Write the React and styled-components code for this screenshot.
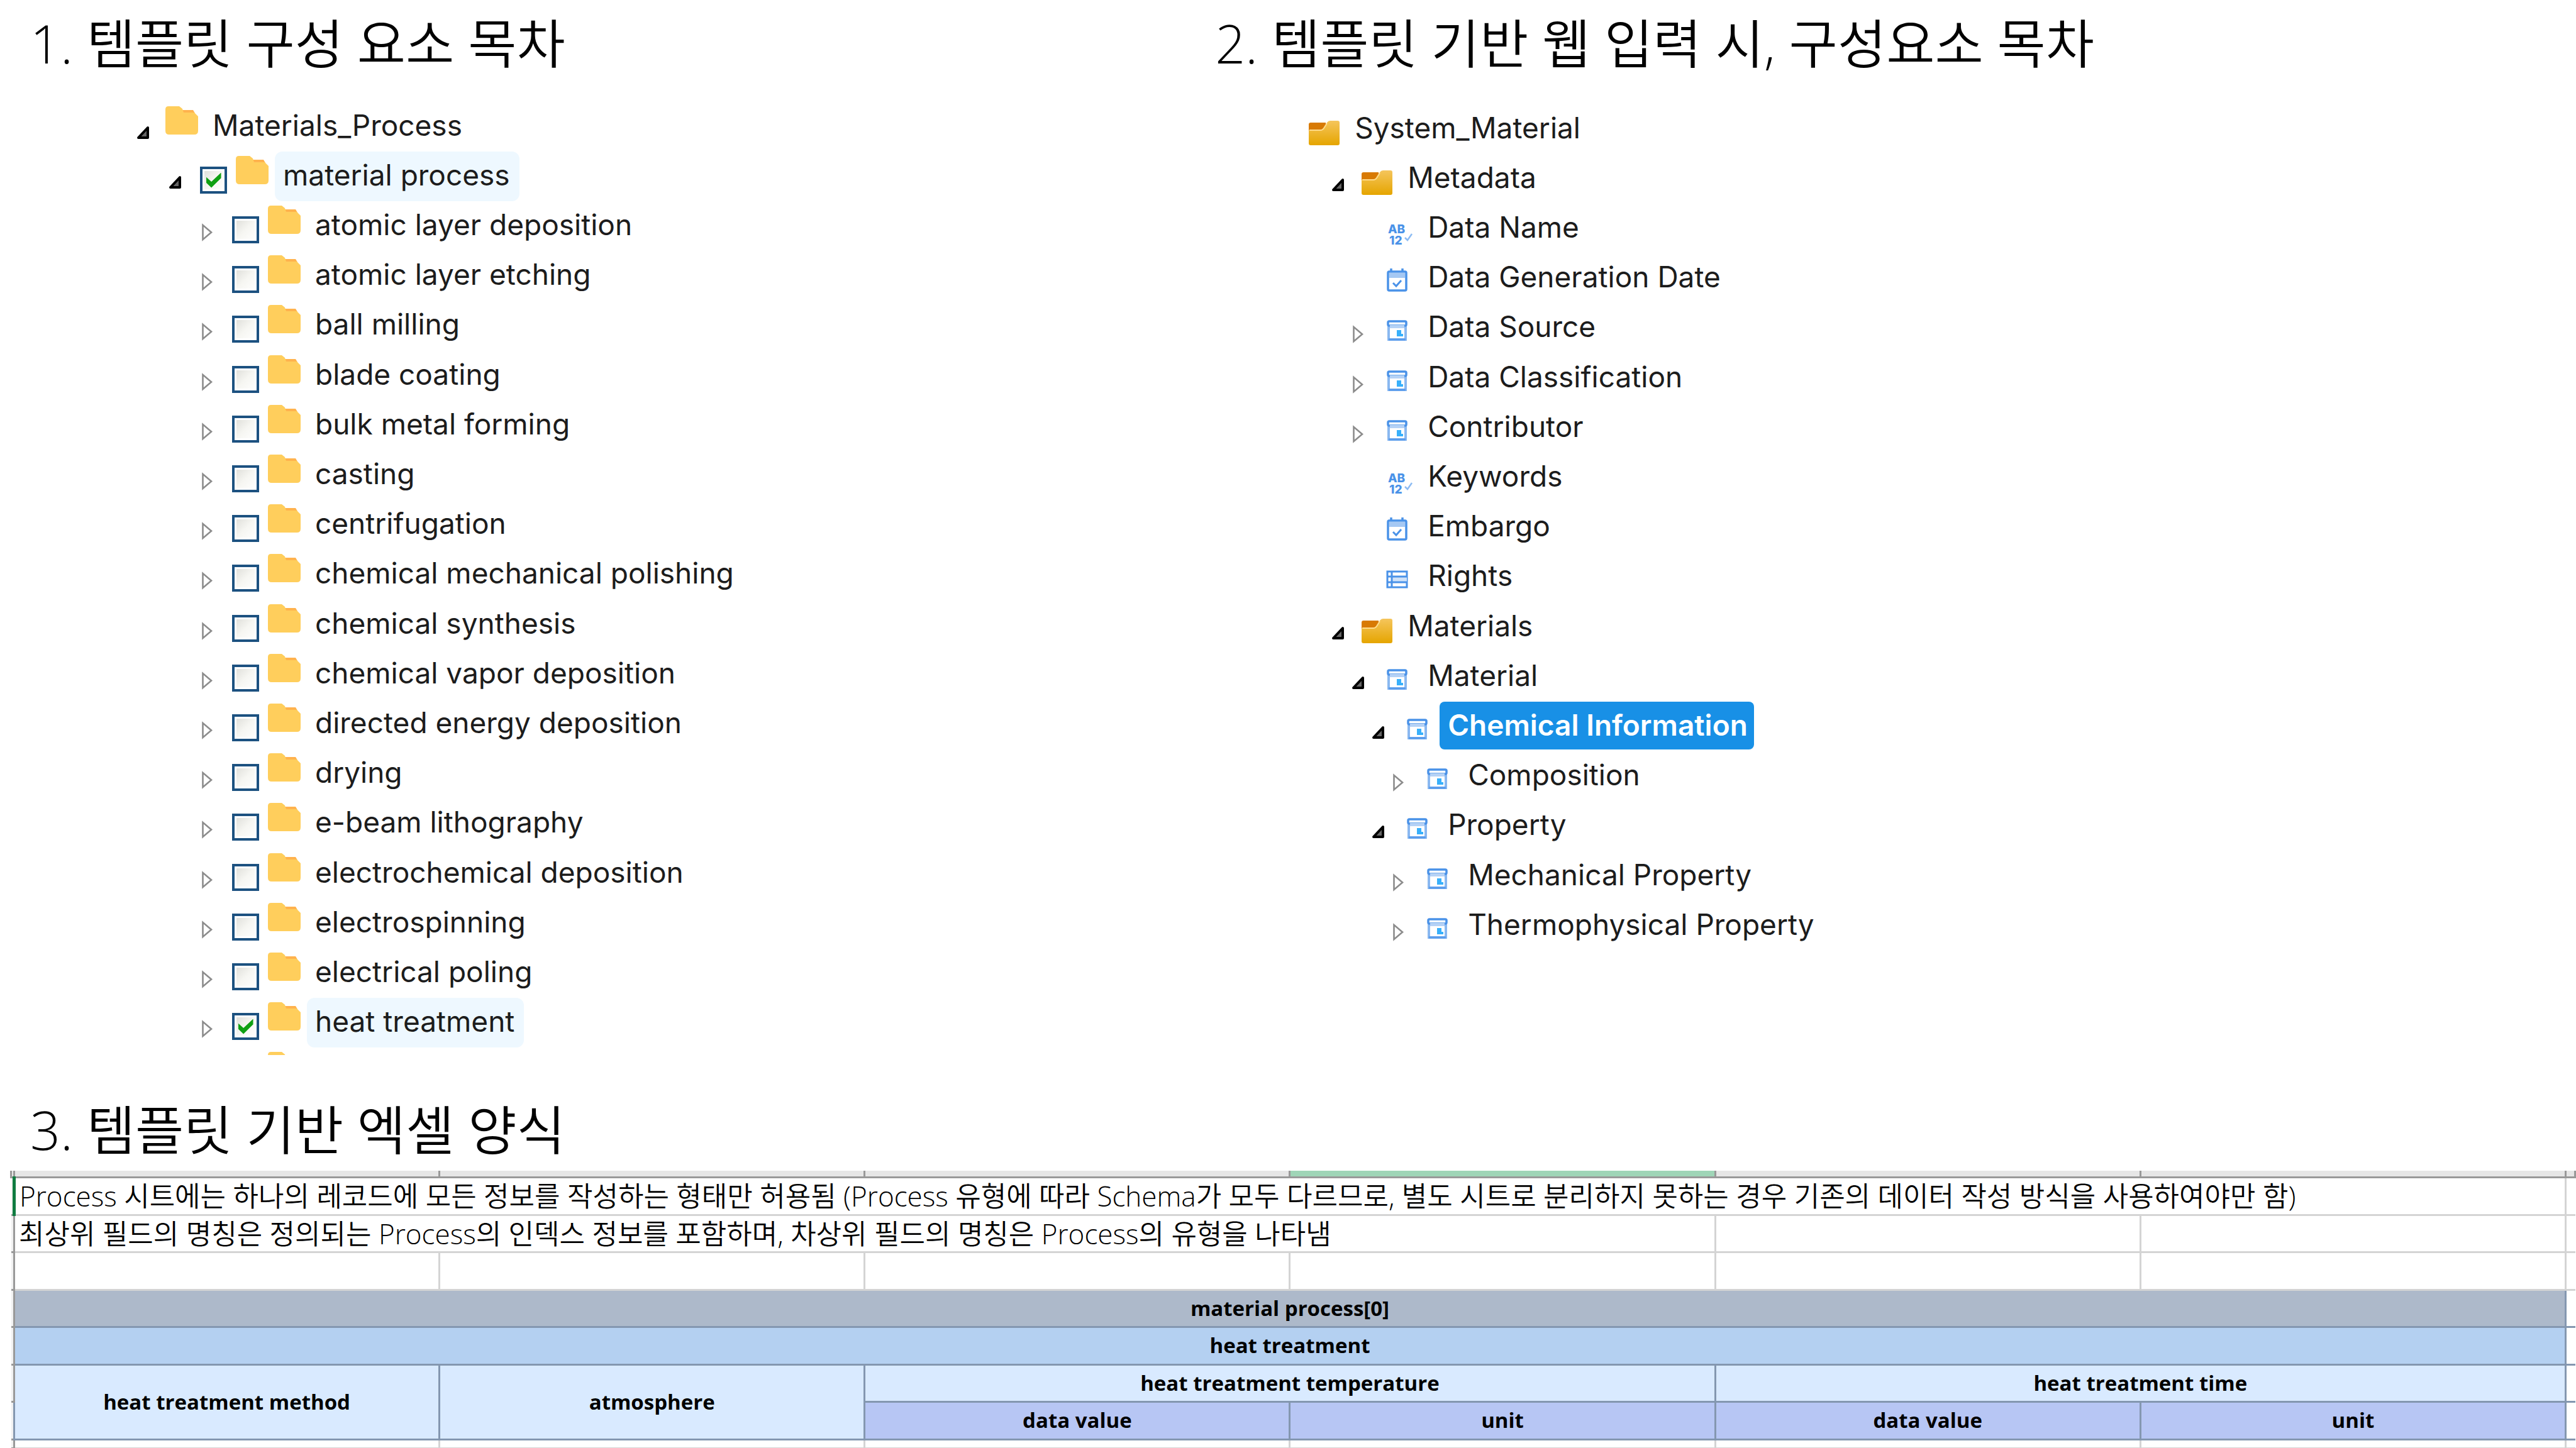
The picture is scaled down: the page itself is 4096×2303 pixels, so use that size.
import React, { useState } from 'react';
import styled, { createGlobalStyle, css } from 'styled-components';

const GlobalStyle = createGlobalStyle`
  * {
    box-sizing: border-box;
  }

  body {
    margin: 0;
    background: #fff;
  }
`;

const Page = styled.main`
  width: 100%;
  overflow: hidden;
  color: #000;
  font-family: "Open Sans", "Noto Sans CJK KR", sans-serif;
`;

const Outlines = styled.div`
  display: grid;
  grid-template-columns: 46% 54%;
`;

const Section = styled.section`
  min-width: 0;
`;

const Heading = styled.h2`
  margin: 0;
  padding: 16px 0 0 48px;
  font-size: 84px;
  font-weight: 350;
  line-height: 106px;
  white-space: nowrap;
`;

const Tree = styled.ul`
  margin: 0;
  padding: ${(props) => (props.$wide ? '44px 0 0 197px' : '40px 0 0 213px')};
  list-style: none;
  font-family: Inter, sans-serif;
  font-size: 46px;
  color: #1c1c1c;
`;

const Row = styled.li`
  display: flex;
  align-items: flex-start;
  height: 79px;
  padding-left: ${(props) => props.$indent}px;

  &:nth-child(5n) {
    height: 80px;
  }

  ${(props) => props.$cut && css`
    &:last-child {
      height: 12px;
      overflow: hidden;
    }
  `}
`;

const Toggle = styled.button`
  width: ${(props) => (props.$wide ? 52 : 50)}px;
  height: 30px;
  margin: 35px 0 0;
  padding: 0;
  border: none;
  background: none;
  cursor: pointer;

  svg {
    display: block;
  }
`;

const Spacer = styled.span`
  width: 52px;
`;

const Check = styled.input`
  appearance: none;
  display: grid;
  place-content: center;
  width: 43px;
  height: 43px;
  margin: 24px 14px 0 4px;
  border: 4px solid #1c5180;
  background: linear-gradient(135deg, #dcdcd7 0%, #f6f6f2 50%, #fff 100%);
  box-shadow: inset 0 0 0 3px #fff;

  &:checked::after {
    content: '';
    width: 24px;
    height: 24px;
    background: #0fa012;
    clip-path: polygon(0 28%, 36% 60%, 100% 0, 100% 36%, 36% 100%, 0 66%);
  }
`;

const FolderIcon = styled.svg`
  flex: none;
  width: 52px;
  height: 46px;
  margin: 7px 10px 0 0;
`;

const NodeIcon = styled.svg`
  flex: none;
  width: 49px;
  height: 44px;
  margin: 24px 11px 0 0;
  overflow: visible;
`;

const Name = styled.label`
  height: 79px;
  padding: 0 15px 0 13px;
  border-radius: 12px;
  line-height: 75px;
  white-space: nowrap;
  background: ${(props) => (props.$checked ? '#eef8ff' : 'transparent')};

  ${(props) => props.$selected && css`
    height: 76px;
    padding-right: 10px;
    border-radius: 8px;
    background: #1890e6;
    color: #fff;
    font-weight: 600;
  `}
`;

const SheetWrap = styled.div`
  margin-top: 12px;
  padding-left: 16px;
`;

const Sheet = styled.table`
  width: 100%;
  table-layout: fixed;
  border-collapse: collapse;
  font-size: 33px;
  line-height: 48px;

  tr {
    height: 60px;
  }

  tr:nth-child(odd) {
    height: 59px;
  }

  tr:first-child {
    height: 10px;
  }

  tr:last-child {
    height: 14px;
  }
`;

const Col = styled.col`
  width: ${(props) => props.$width};
`;

const lineColors = { light: '#d4d4d4', dark: '#8497b0' };

const Cell = styled.td`
  padding: 0;
  border: 3px solid ${(props) => lineColors[props.$line || 'light']};
  background: #fff;
`;

const HeadCell = styled(Cell)`
  border-top: none;
  border-color: #999;
  background: ${(props) => (props.$active ? '#9fd5b7' : '#e6e6e6')};
`;

const Gutter = styled(Cell)`
  border-left: none;
  border-color: #999;
  background: #f1f1f1;
`;

const EndCell = styled(Cell)`
  border-right: none;
`;

const Note = styled(Cell)`
  padding-left: 6px;
  font-size: 44px;
  font-weight: 350;
  white-space: nowrap;
  ${(props) => props.$active && css`
    border-left: 5px solid #107c41;
  `}
`;

const FieldCell = styled.th`
  padding: 0;
  border: 3px solid #8497b0;
  background: ${(props) => props.$fill};
  font-weight: 700;
  text-align: center;
`;

const processes = [
  'atomic layer deposition',
  'atomic layer etching',
  'ball milling',
  'blade coating',
  'bulk metal forming',
  'casting',
  'centrifugation',
  'chemical mechanical polishing',
  'chemical synthesis',
  'chemical vapor deposition',
  'directed energy deposition',
  'drying',
  'e-beam lithography',
  'electrochemical deposition',
  'electrospinning',
  'electrical poling',
  'heat treatment',
];

const nodes = [
  { name: 'System_Material', level: 0, icon: 'folder' },
  { name: 'Metadata', level: 1, icon: 'folder', toggle: 'open' },
  { name: 'Data Name', level: 2, icon: 'text' },
  { name: 'Data Generation Date', level: 2, icon: 'date' },
  { name: 'Data Source', level: 2, icon: 'group', toggle: 'closed' },
  { name: 'Data Classification', level: 2, icon: 'group', toggle: 'closed' },
  { name: 'Contributor', level: 2, icon: 'group', toggle: 'closed' },
  { name: 'Keywords', level: 2, icon: 'text' },
  { name: 'Embargo', level: 2, icon: 'date' },
  { name: 'Rights', level: 2, icon: 'list' },
  { name: 'Materials', level: 1, icon: 'folder', toggle: 'open' },
  { name: 'Material', level: 2, icon: 'group', toggle: 'open' },
  { name: 'Chemical Information', level: 3, icon: 'group', toggle: 'open', selected: true },
  { name: 'Composition', level: 4, icon: 'group', toggle: 'closed' },
  { name: 'Property', level: 3, icon: 'group', toggle: 'open' },
  { name: 'Mechanical Property', level: 4, icon: 'group', toggle: 'closed' },
  { name: 'Thermophysical Property', level: 4, icon: 'group', toggle: 'closed' },
];

const ToggleButton = ({ open, label, wide }) => (
  <Toggle type="button" aria-expanded={open} aria-label={label} $wide={wide}>
    <svg width="30" height="30" viewBox="0 0 30 30">
      {open ? (
        <path d="M22 6v16H7z" fill="#666" stroke="#000" strokeWidth="4" strokeLinejoin="round" />
      ) : (
        <path d="M7.500 3v23L21 14.500z" fill="#fff" stroke="#8c8c8c" strokeWidth="2.600" />
      )}
    </svg>
  </Toggle>
);

const Folder = () => (
  <FolderIcon viewBox="0 0 52 46">
    <path d="M24 6h20l3 5H24z" fill="#ffb24d" />
    <path d="M5 0h17l5 4 2 6h17l6 6v23q0 6-6 6H6q-6 0-6-6V5q0-5 5-5z" fill="#ffce5c" />
  </FolderIcon>
);

const icons = {
  folder: (
    <>
      <defs>
        <linearGradient id="folderFront" x1="0" y1="0" x2="0" y2="1">
          <stop offset="0" stopColor="#f5c55c" />
          <stop offset="1" stopColor="#e5a500" />
        </linearGradient>
      </defs>
      <path d="M3 5h24v14H0V8q0-3 3-3z" fill="#d87a04" />
      <path d="M0 17h18q3 0 5-3l6-9q2-3 5-3h12q3 0 3 3v33q0 3-3 3H3q-3 0-3-3z" fill="url(#folderFront)" />
      <path d="M1 17h18q3 0 5-3l5-8" fill="none" stroke="#ffdc8c" strokeWidth="2" />
    </>
  ),
  text: (
    <>
      <g fill="#4a92e8" fontFamily="Inter, sans-serif" fontSize="19" fontWeight="800">
        <text x="10" y="23">AB</text>
        <text x="12" y="41">12</text>
      </g>
      <path d="M37 30l4 4 7-10" fill="none" stroke="#8dbcf3" strokeWidth="2.500" />
    </>
  ),
  date: (
    <>
      <path d="M15 0v5M33 0v5" stroke="#4a92e8" strokeWidth="3.500" />
      <rect x="10" y="5" width="29" height="30" rx="2" fill="#fff" stroke="#4a92e8" strokeWidth="3.500" />
      <path d="M12 7h25v8H12z" fill="#a5c8f3" />
      <path d="M18 23l5 5 8-9" fill="none" stroke="#4a92e8" strokeWidth="3" />
    </>
  ),
  group: (
    <>
      <path d="M11 12v22h27V12" fill="#fff" stroke="#8ab8f0" strokeWidth="4" />
      <path d="M11 34h27" stroke="#5a9cec" strokeWidth="3.500" />
      <rect x="10" y="5" width="29" height="7" rx="2" fill="#fff" stroke="#4a92e8" strokeWidth="3.500" />
      <path d="M13 11h23v5H13z" fill="#b5d2f6" />
      <path d="M24 19h7v6h3v4H24z" fill="#38b0fb" />
    </>
  ),
  list: (
    <>
      <rect x="9" y="7" width="31" height="25" fill="#fff" stroke="#4a92e8" strokeWidth="3" />
      <path d="M17 15h23v9H17z" fill="#cfe2f9" />
      <path d="M9 15h31M9 24h31M16 7v25" stroke="#4a92e8" strokeWidth="3" />
    </>
  ),
};

const ProcessTree = () => {
  const [checked, setChecked] = useState({ 'material process': true, 'heat treatment': true });

  const handleCheck = (name) => {
    setChecked({ ...checked, [name]: !checked[name] });
  };

  const renderRow = (name, indent, open) => {
    const id = name.replace(/ /g, '-');
    return (
      <Row key={name} $indent={indent}>
        <ToggleButton open={open} label={`toggle ${name}`} />
        <Check type="checkbox" id={id} checked={!!checked[name]} onChange={() => handleCheck(name)} />
        <Folder />
        <Name htmlFor={id} $checked={checked[name]}>{name}</Name>
      </Row>
    );
  };

  return (
    <Tree>
      <Row $indent={0}>
        <ToggleButton open label="toggle Materials_Process" />
        <Folder />
        <Name as="span">Materials_Process</Name>
      </Row>
      {renderRow('material process', 51, true)}
      {processes.map((name) => renderRow(name, 102, false))}
      <Row $indent={213} $cut>
        <Folder />
      </Row>
    </Tree>
  );
};

const MaterialTree = () => (
  <Tree $wide>
    {nodes.map((node) => (
      <Row key={node.name} $indent={node.level * 32}>
        {node.toggle && (
          <ToggleButton open={node.toggle === 'open'} label={`toggle ${node.name}`} wide />
        )}
        {!node.toggle && node.level > 0 && <Spacer />}
        <NodeIcon viewBox="0 0 49 44">{icons[node.icon]}</NodeIcon>
        <Name as="span" $selected={node.selected}>{node.name}</Name>
      </Row>
    ))}
  </Tree>
);

const ExcelSheet = () => (
  <SheetWrap>
    <Sheet>
      <colgroup>
        <Col $width="5px" />
        <Col />
        <Col />
        <Col />
        <Col />
        <Col />
        <Col />
        <Col $width="15px" />
      </colgroup>
      <tbody>
        <tr>
          <HeadCell />
          <HeadCell />
          <HeadCell />
          <HeadCell />
          <HeadCell $active />
          <HeadCell />
          <HeadCell />
          <HeadCell />
        </tr>
        <tr>
          <Gutter />
          <Note colSpan={6} $active>
            Process 시트에는 하나의 레코드에 모든 정보를 작성하는 형태만 허용됨 (Process 유형에 따라 Schema가 모두 다르므로, 별도 시트로 분리하지 못하는 경우 기존의 데이터 작성 방식을 사용하여야만 함)
          </Note>
          <EndCell />
        </tr>
        <tr>
          <Gutter />
          <Note colSpan={4}>
            최상위 필드의 명칭은 정의되는 Process의 인덱스 정보를 포함하며, 차상위 필드의 명칭은 Process의 유형을 나타냄
          </Note>
          <Cell />
          <Cell />
          <EndCell />
        </tr>
        <tr>
          <Gutter />
          <Cell />
          <Cell />
          <Cell />
          <Cell />
          <Cell />
          <Cell />
          <EndCell />
        </tr>
        <tr>
          <Gutter />
          <FieldCell colSpan={6} $fill="#adb9ca">material process[0]</FieldCell>
          <EndCell $line="dark" />
        </tr>
        <tr>
          <Gutter />
          <FieldCell colSpan={6} $fill="#b4d0f1">heat treatment</FieldCell>
          <EndCell $line="dark" />
        </tr>
        <tr>
          <Gutter />
          <FieldCell rowSpan={2} $fill="#d9eaff">heat treatment method</FieldCell>
          <FieldCell rowSpan={2} $fill="#d9eaff">atmosphere</FieldCell>
          <FieldCell colSpan={2} $fill="#d9eaff">heat treatment temperature</FieldCell>
          <FieldCell colSpan={2} $fill="#d9eaff">heat treatment time</FieldCell>
          <EndCell $line="dark" />
        </tr>
        <tr>
          <Gutter />
          <FieldCell $fill="#b7c6f4">data value</FieldCell>
          <FieldCell $fill="#b7c6f4">unit</FieldCell>
          <FieldCell $fill="#b7c6f4">data value</FieldCell>
          <FieldCell $fill="#b7c6f4">unit</FieldCell>
          <EndCell $line="dark" />
        </tr>
        <tr>
          <Gutter />
          <Cell />
          <Cell />
          <Cell />
          <Cell />
          <Cell />
          <Cell />
          <EndCell />
        </tr>
      </tbody>
    </Sheet>
  </SheetWrap>
);

const Sections = styled.div`
  display: flex;
  flex-direction: column;
  gap: 50px;
`;

const App = () => (
  <Page>
    <GlobalStyle />
    <Sections>
      <Outlines>
        <Section>
          <Heading>1. 템플릿 구성 요소 목차</Heading>
          <ProcessTree />
        </Section>
        <Section>
          <Heading>2. 템플릿 기반 웹 입력 시, 구성요소 목차</Heading>
          <MaterialTree />
        </Section>
      </Outlines>
      <Section>
        <Heading>3. 템플릿 기반 엑셀 양식</Heading>
        <ExcelSheet />
      </Section>
    </Sections>
  </Page>
);

export default App;
